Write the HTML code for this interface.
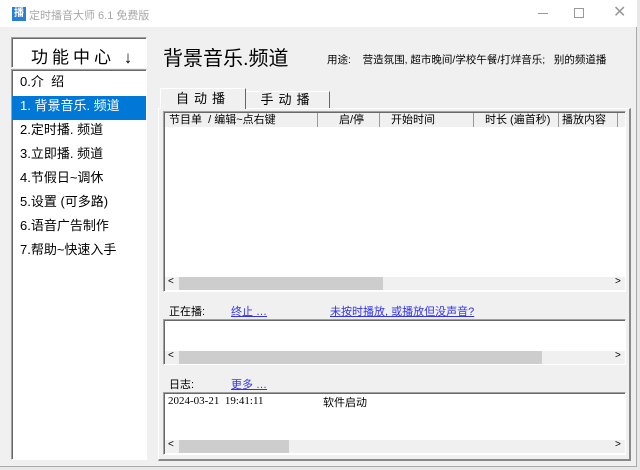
<!DOCTYPE html>
<html><head><meta charset="utf-8"><style>
*{margin:0;padding:0;box-sizing:border-box}
body{width:640px;height:470px;background:#e8e8e8;position:relative;overflow:hidden;font-family:"Liberation Sans","Noto Sans CJK SC",sans-serif;font-size:12px;color:#000}
.a{position:absolute}
.win{left:0;top:0;width:637px;height:467px;background:#f0f0f0;border-right:1px solid #aaa;border-bottom:1px solid #aaa}
.title{left:0;top:0;width:637px;height:27px;background:#fff}
.sunk{border-top:1px solid #a0a0a0;border-left:1px solid #a0a0a0;border-right:1px solid #fff;border-bottom:1px solid #fff;box-shadow:inset 1px 1px 0 #696969}
.hs{height:13px;background:#f0f0f0}
.thumb{background:#cdcdcd;height:13px;top:0}
.lnk{color:#3333ee;text-decoration:underline}
</style></head><body>
<div class="a win"></div>
<div class="a title"></div>
<div class="a" style="left:12px;top:7px;width:14px;height:14px;background:#2a7fd4;color:#fff;font-size:10px;line-height:14px;text-align:center;font-weight:bold">播</div>
<div class="a" style="left:29px;top:7px;color:#a8a8a8;font-size:11px">定时播音大师 6.1 免费版</div>
<div class="a" style="left:538px;top:13px;width:10px;height:1px;background:#999"></div>
<div class="a" style="left:574px;top:8px;width:10px;height:10px;border:1px solid #999"></div>
<div class="a" style="left:613px;top:2px;color:#999;font-size:16px">✕</div>

<div class="a sunk" style="left:11px;top:37px;width:136px;height:31px;background:#fff"></div>
<div class="a" style="left:31px;top:43px;font-size:17px;letter-spacing:4px">功能中心 ↓</div>
<div class="a sunk" style="left:11px;top:69px;width:136px;height:391px;background:#fff"></div>
<div class="a" style="left:12px;top:96px;width:134px;height:24px;background:#0078d7"></div>
<div class="a" style="left:20px;top:70px;font-size:13px;line-height:24px">
<div>0.介&nbsp;&nbsp;绍</div><div style="color:#fff">1. 背景音乐. 频道</div><div>2.定时播. 频道</div><div>3.立即播. 频道</div><div>4.节假日~调休</div><div>5.设置 (可多路)</div><div>6.语音广告制作</div><div>7.帮助~快速入手</div></div>

<div class="a" style="left:163px;top:42px;font-size:20px">背景音乐.频道</div>
<div class="a" style="left:327px;top:52px;font-size:10.5px">用途:&nbsp;&nbsp;&nbsp;&nbsp;营造氛围, 超市晚间/学校午餐/打烊音乐;&nbsp;&nbsp;&nbsp;别的频道播</div>

<div class="a" style="left:158px;top:108px;width:473px;height:353px;border:1px solid #fff;border-right:2px solid #8a8a8a;border-bottom:2px solid #8a8a8a"></div>
<div class="a" style="left:160px;top:88px;width:86px;height:21px;background:#f0f0f0;border:1px solid #fff;border-bottom:none;border-right:1px solid #666;text-align:center;line-height:20px;font-size:13px;letter-spacing:5px">自动播</div>
<div class="a" style="left:246px;top:91px;width:84px;height:17px;border-top:1px solid #fff;border-right:1px solid #666;text-align:center;line-height:16px;font-size:13px;letter-spacing:5px">手动播</div>

<div class="a sunk" style="left:163px;top:111px;width:463px;height:181px;background:#fff"></div>
<div class="a" style="left:165px;top:113px;width:460px;height:14px;background:#f0f0f0;font-size:11px;line-height:14px">
<span class="a" style="left:4px">节目单&nbsp;&nbsp;/ 编辑~点右键</span>
<span class="a" style="left:152px;top:0;width:1px;height:14px;background:#999"></span>
<span class="a" style="left:174px">启/停</span>
<span class="a" style="left:214px;top:0;width:1px;height:14px;background:#999"></span>
<span class="a" style="left:226px">开始时间</span>
<span class="a" style="left:308px;top:0;width:1px;height:14px;background:#999"></span>
<span class="a" style="left:320px">时长 (遍首秒)</span>
<span class="a" style="left:393px;top:0;width:1px;height:14px;background:#999"></span>
<span class="a" style="left:397px">播放内容</span>
<span class="a" style="left:452px;top:0;width:1px;height:14px;background:#999"></span></div>
<div class="a hs" style="left:165px;top:277px;width:460px"><div class="a thumb" style="left:14px;width:204px"></div><span class="a" style="left:3px;top:-1px;font-size:10px">&lt;</span><span class="a" style="left:450px;top:-1px;font-size:10px">&gt;</span></div>

<div class="a" style="left:169px;top:303px;font-size:11px">正在播:</div>
<div class="a lnk" style="left:231px;top:303px;font-size:11px">终止 …</div>
<div class="a lnk" style="left:330px;top:303px;font-size:11px">未按时播放, 或播放但没声音?</div>
<div class="a sunk" style="left:163px;top:319px;width:463px;height:46px;background:#fff"></div>
<div class="a hs" style="left:165px;top:351px;width:460px"><div class="a thumb" style="left:14px;width:363px"></div><span class="a" style="left:3px;top:-1px;font-size:10px">&lt;</span><span class="a" style="left:450px;top:-1px;font-size:10px">&gt;</span></div>

<div class="a" style="left:169px;top:376px;font-size:11px">日志:</div>
<div class="a lnk" style="left:231px;top:376px;font-size:11px">更多 …</div>
<div class="a sunk" style="left:163px;top:392px;width:463px;height:63px;background:#fff"></div>
<div class="a" style="left:168px;top:395px;font-family:'Liberation Serif','Noto Serif CJK SC',serif;font-size:11px">2024-03-21&nbsp;&nbsp;19:41:11</div>
<div class="a" style="left:323px;top:394px;font-size:11px">软件启动</div>
<div class="a hs" style="left:165px;top:440px;width:460px"><div class="a thumb" style="left:14px;width:110px"></div><span class="a" style="left:3px;top:-1px;font-size:10px">&lt;</span><span class="a" style="left:450px;top:-1px;font-size:10px">&gt;</span></div>
</body></html>
